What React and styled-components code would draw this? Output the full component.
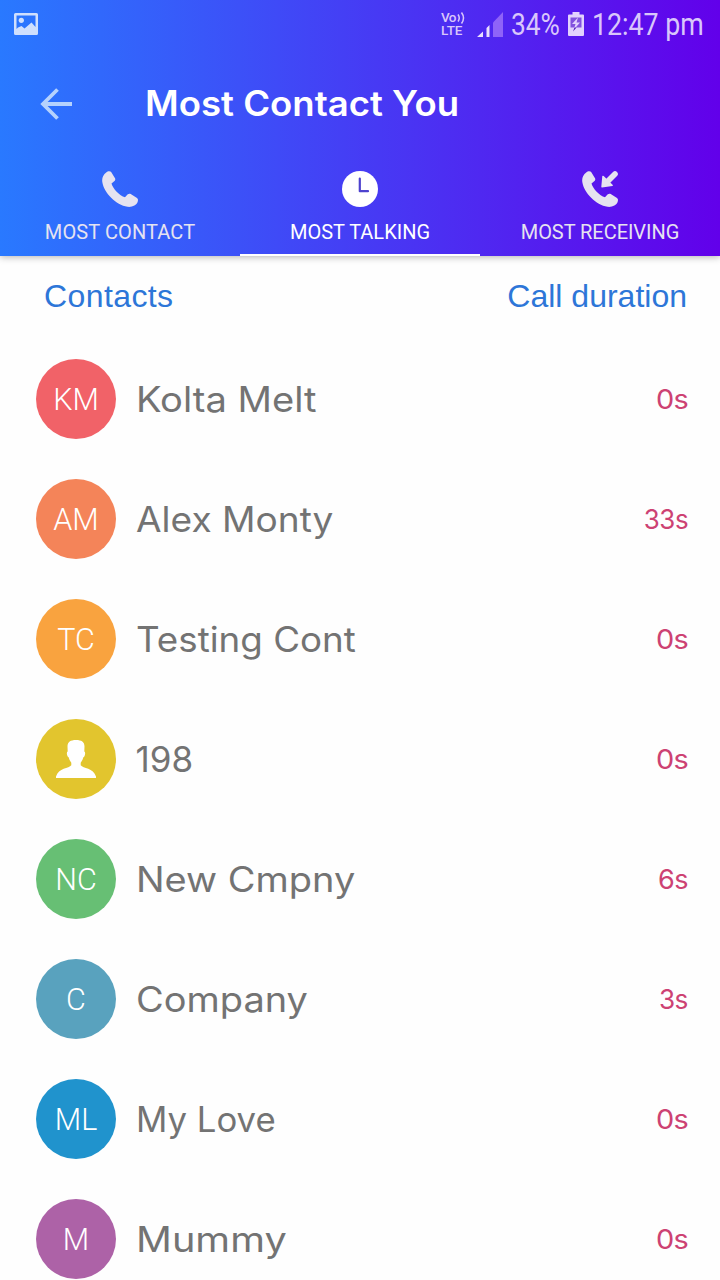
import React from "react";
import styled, { createGlobalStyle } from "styled-components";

const GlobalStyle = createGlobalStyle`
  * { box-sizing: border-box; }
  html, body { margin: 0; padding: 0; background: #fefefe; }
  body { width: 720px; height: 1280px; overflow: hidden; }
`;

const Screen = styled.div`
  display: flex;
  flex-direction: column;
  width: 720px;
  height: 1280px;
  overflow: hidden;
  background: #fefefe;
  font-family: Inter, "Open Sans", sans-serif;
`;

const Header = styled.header`
  display: flex;
  flex-direction: column;
  flex: none;
  height: 256px;
  background: linear-gradient(90deg, #2979ff, #6200ea);
  box-shadow: 0 1px 7px rgba(0, 0, 0, 0.3);
`;

const StatusBar = styled.div`
  display: flex;
  align-items: center;
  justify-content: space-between;
  height: 48px;
  padding: 0 16px 0 14px;
`;

const StatusGroup = styled.div`
  display: flex;
  align-items: center;
  color: #d9c6fb;
`;

const StatusText = styled.span`
  width: ${(p) => p.$width}px;
  margin-left: ${(p) => p.$gap}px;
  padding-top: 2px;
  font-family: Roboto, sans-serif;
  font-size: 31px;
  line-height: 48px;
  white-space: nowrap;
  transform: scaleX(${(p) => p.$stretch});
  transform-origin: left;
`;

const Volte = styled.span`
  display: flex;
  flex-direction: column;
  width: 24px;
  font-family: Roboto, sans-serif;
  font-weight: 500;
  font-size: 13.5px;
  line-height: 13px;
`;

const VolteRow = styled.span`
  display: flex;
  align-items: center;
  gap: 1px;
  height: 13px;
  letter-spacing: ${(p) => p.$tracking || 0}px;
`;

const IconGap = styled.span`
  display: flex;
  margin-left: ${(p) => p.$gap}px;
`;

const Toolbar = styled.div`
  display: flex;
  align-items: center;
  height: 112px;
  padding-left: 40px;
`;

const Title = styled.h1`
  margin: 0 0 2px 73px;
  font-size: 35px;
  line-height: 44px;
  font-weight: 600;
  color: #fff;
  white-space: nowrap;
  transform: scaleX(1.044);
  transform-origin: left;
`;

const Tabs = styled.nav`
  display: grid;
  grid-template-columns: repeat(3, 1fr);
  height: 96px;
`;

const Tab = styled.div`
  display: flex;
  flex-direction: column;
  align-items: center;
  padding-top: 10px;
  color: ${(p) => (p.$active ? "#fff" : "#e6e3f0")};
  border-bottom: 2px solid ${(p) => (p.$active ? "#fff" : "transparent")};
`;

const TabLabel = styled.span`
  margin-top: 12px;
  font-family: Roboto, sans-serif;
  font-size: 20px;
  line-height: 24px;
  letter-spacing: ${(p) => p.$tracking || 0}px;
  white-space: nowrap;
`;

const ColumnHeads = styled.div`
  display: flex;
  justify-content: space-between;
  flex: none;
  height: 83px;
  padding: 22px 33px 0 44px;
`;

const ColumnHead = styled.span`
  font-family: "Liberation Sans", sans-serif;
  font-size: 32px;
  line-height: 36px;
  letter-spacing: ${(p) => p.$tracking}px;
  color: #2d76d8;
`;

const List = styled.ul`
  margin: 0;
  padding: 0;
  list-style: none;
`;

const Row = styled.li`
  display: flex;
  align-items: center;
  height: 120px;
  padding: 0 32px 0 36px;
`;

const Avatar = styled.div`
  display: flex;
  align-items: center;
  justify-content: center;
  flex: none;
  width: 80px;
  height: 80px;
  border-radius: 50%;
  background: ${(p) => p.$color};
  color: #fff;
  font-family: Roboto, sans-serif;
  font-weight: 300;
  font-size: 30.5px;
  line-height: 80px;
  padding-top: ${(p) => (p.$icon ? 0 : 2)}px;
`;

const Name = styled.span`
  margin-left: 19.5px;
  margin-right: auto;
  font-size: 35px;
  line-height: 44px;
  color: #737373;
  white-space: nowrap;
  transform: scaleX(${(p) => p.$stretch});
  transform-origin: left;
`;

const Duration = styled.span`
  padding-top: 2px;
  font-size: 27px;
  line-height: 36px;
  letter-spacing: -0.5px;
  color: #cd4273;
  transform: scaleX(${(p) => p.$stretch});
  transform-origin: right;
`;

const PictureIcon = () => (
  <svg width="24" height="22" viewBox="0 0 24 22" fill="#cfdffd">
    <path fillRule="evenodd" d="M1.5 0h21Q24 0 24 1.5v19Q24 22 22.5 22h-21Q0 22 0 20.5v-19Q0 0 1.5 0zM2.500 2.500V16L4 14.500 7.500 13 10.500 15.500 17.500 9.500 21.500 14V2.500z" />
    <circle cx="7.3" cy="7.3" r="2.6" />
  </svg>
);

const BackIcon = () => (
  <svg width="32" height="32" viewBox="0 0 32 32" fill="none" stroke="#b5d2fd" strokeWidth="3.8">
    <path d="M32 16H3M17.500 1.500 3 16l14.500 14.500" />
  </svg>
);

const VolteMark = () => (
  <Volte>
    <VolteRow $tracking={-0.6}>
      Vo
      <svg width="8" height="12" viewBox="0 0 8 12" fill="none" stroke="currentColor" strokeWidth="1.5">
        <path d="M1 2.500Q3.500 6 1 9.500M4.500 .500Q8.500 6 4.500 11.500" />
      </svg>
    </VolteRow>
    <VolteRow>LTE</VolteRow>
  </Volte>
);

const SignalIcon = () => (
  <svg width="26" height="25" viewBox="0 0 26 25">
    <path d="M0 25 6 19.500V25zM9.500 16 12.500 13V25H9.500z" fill="#eadffd" />
    <path d="M16 10.500 26 0V25H16z" fill="#8f63f8" />
  </svg>
);

const BatteryIcon = () => (
  <svg width="16" height="24" viewBox="0 0 16 24">
    <path d="M4.500 0h7v2.500H15Q16 2.500 16 3.500V23Q16 24 15 24H1Q0 24 0 23V3.500Q0 2.500 1 2.500h3.500z" fill="#e2d2fd" />
    <path d="M2.500 5.500h11v10h-11z" fill="#8252df" />
    <path d="M10 5.500 4 12h3.500L5.500 18 12 10.500H8.500z" fill="#e2d2fd" />
    <path d="M6.500 15.500 5 19.500 8.500 15.500z" fill="#4814b8" />
  </svg>
);

const handset =
  "M4.200 1.500C5.500 .200 7.800 -.200 9 .800L13 7.300C13.600 8.600 13.200 9.600 12.200 10.300L9.500 12.500C10.800 17.500 17.500 24.700 23 26.300L25.500 23.600C26.500 22.700 27.700 22.600 28.700 23.100L35 26.900C36.300 27.900 36.100 29.300 35.700 30.800C34.500 34.500 30 36.300 25.500 35.800C14 34 2 22 .300 11C-.300 7 1.200 3.800 4.200 1.500Z";

const PhoneIcon = () => (
  <svg width="36" height="38" viewBox="0 -1 36 38" fill="currentColor">
    <path d={handset} />
  </svg>
);

const ClockIcon = () => (
  <svg width="36" height="38" viewBox="0 -1 36 38">
    <circle cx="18" cy="18" r="18" fill="#fff" />
    <path d="M17.800 7.500V20.200H26" fill="none" stroke="#4d42ce" strokeWidth="2.2" strokeLinecap="round" strokeLinejoin="round" />
  </svg>
);

const ReceiveIcon = () => (
  <svg width="36" height="38" viewBox="0 -1 36 38" fill="currentColor">
    <path d={handset} />
    <path d="M20.300 5Q20.900 4.300 21.700 5L30.800 14Q31.200 14.900 30.400 15.100L20 16.500Q19.200 16.500 19.300 15.700z" />
    <path d="M24.500 11.500 33 3" fill="none" stroke="currentColor" strokeWidth="5.600" strokeLinecap="round" />
  </svg>
);

const PersonIcon = () => (
  <svg width="40" height="40" viewBox="0 0 40 40" fill="#fff">
    <path d="M20 1C25.500 1 28.500 3 28.500 7.500L28.300 12.500Q29.600 13 28.900 16Q28.500 18 27.400 18.300Q26.600 21.500 24.700 23.800V26.300C27 29.500 37.500 29 40 37.500V39H0V37.500C2.500 29 13 29.500 15.300 26.300V23.800Q13.400 21.500 12.600 18.300Q11.500 18 11.100 16Q10.400 13 11.700 12.500L11.500 7.500C11.500 3 14.500 1 20 1Z" />
  </svg>
);

const contacts = [
  { initials: "KM", name: "Kolta Melt", time: "0s", color: "#f16268", stretch: 1.09 },
  { initials: "AM", name: "Alex Monty", time: "33s", color: "#f48459", stretch: 1.06 },
  { initials: "TC", name: "Testing Cont", time: "0s", color: "#f9a33f", stretch: 1.05 },
  { name: "198", time: "0s", color: "#e2c52e", stretch: 1 },
  { initials: "NC", name: "New Cmpny", time: "6s", color: "#67bf74", stretch: 1.085 },
  { initials: "C", name: "Company", time: "3s", color: "#59a2be", stretch: 1.085 },
  { initials: "ML", name: "My Love", time: "0s", color: "#2093cd", stretch: 0.992 },
  { initials: "M", name: "Mummy", time: "0s", color: "#ad62a7", stretch: 1.135 },
];

const durationStretch = { "0s": 1.07, "33s": 0.96, "3s": 0.97, "6s": 1 };

export default function App() {
  return (
    <Screen>
      <GlobalStyle />
      <Header>
        <StatusBar>
          <PictureIcon />
          <StatusGroup>
            <VolteMark />
            <IconGap $gap={12}><SignalIcon /></IconGap>
            <StatusText $gap={8} $width={49} $stretch={0.85}>34%</StatusText>
            <IconGap $gap={8}><BatteryIcon /></IconGap>
            <StatusText $gap={8} $width={112} $stretch={0.863}>12:47 pm</StatusText>
          </StatusGroup>
        </StatusBar>
        <Toolbar>
          <BackIcon />
          <Title>Most Contact You</Title>
        </Toolbar>
        <Tabs>
          <Tab>
            <PhoneIcon />
            <TabLabel $tracking={0.1}>MOST CONTACT</TabLabel>
          </Tab>
          <Tab $active>
            <ClockIcon />
            <TabLabel>MOST TALKING</TabLabel>
          </Tab>
          <Tab>
            <ReceiveIcon />
            <TabLabel $tracking={-0.05}>MOST RECEIVING</TabLabel>
          </Tab>
        </Tabs>
      </Header>
      <ColumnHeads>
        <ColumnHead $tracking={0.4}>Contacts</ColumnHead>
        <ColumnHead $tracking={0}>Call duration</ColumnHead>
      </ColumnHeads>
      <List>
        {contacts.map((c) => (
          <Row key={c.name}>
            <Avatar $color={c.color} $icon={!c.initials}>{c.initials || <PersonIcon />}</Avatar>
            <Name $stretch={c.stretch}>{c.name}</Name>
            <Duration $stretch={durationStretch[c.time]}>{c.time}</Duration>
          </Row>
        ))}
      </List>
    </Screen>
  );
}
